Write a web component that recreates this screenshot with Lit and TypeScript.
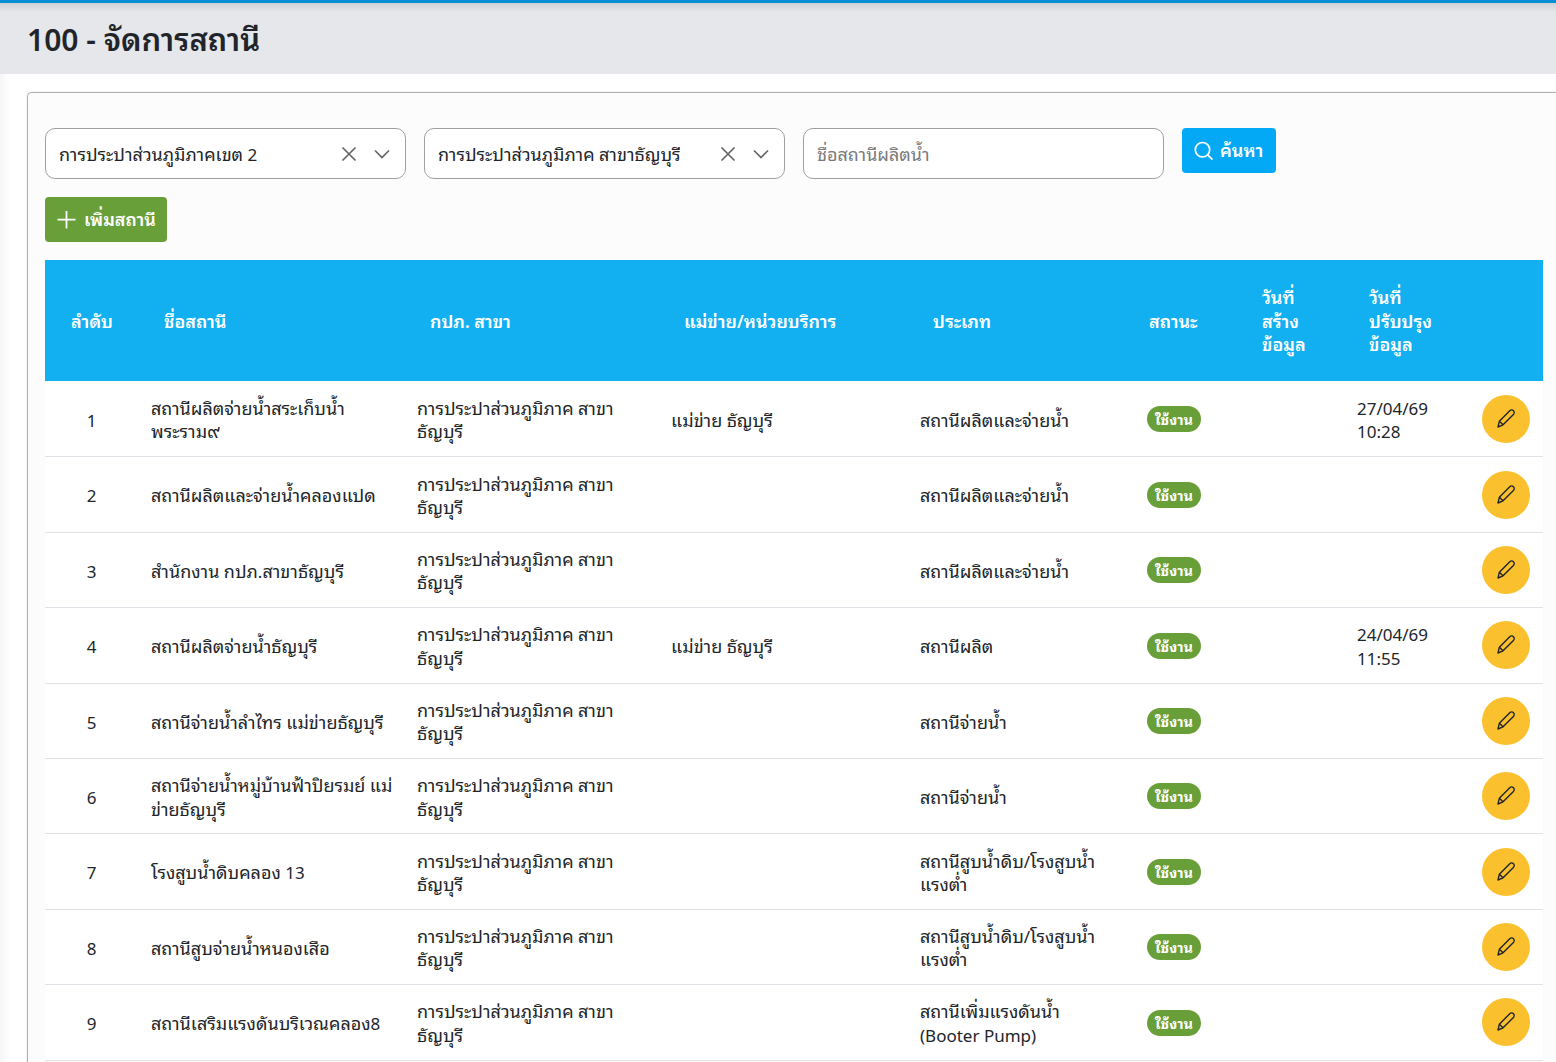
import { LitElement, html, css, svg } from "lit";
import { customElement } from "lit/decorators.js";

const t = (s: string) =>
  s.split(/([\u0E00-\u0E7F]+)/).map((p, i) => (i % 2 ? html`<span class="th">${p}</span>` : p));

const BR = "การประปาส่วนภูมิภาค สาขาธัญบุรี";
const rows = [
  ["1", "สถานีผลิตจ่ายน้ำสระเก็บน้ำพระราม๙", "แม่ข่าย ธัญบุรี", "สถานีผลิตและจ่ายน้ำ", "27/04/69 10:28"],
  ["2", "สถานีผลิตและจ่ายน้ำคลองแปด", "", "สถานีผลิตและจ่ายน้ำ", ""],
  ["3", "สำนักงาน กปภ.สาขาธัญบุรี", "", "สถานีผลิตและจ่ายน้ำ", ""],
  ["4", "สถานีผลิตจ่ายน้ำธัญบุรี", "แม่ข่าย ธัญบุรี", "สถานีผลิต", "24/04/69 11:55"],
  ["5", "สถานีจ่ายน้ำลำไทร แม่ข่ายธัญบุรี", "", "สถานีจ่ายน้ำ", ""],
  ["6", "สถานีจ่ายน้ำหมู่บ้านฟ้าปิยรมย์ แม่ข่ายธัญบุรี", "", "สถานีจ่ายน้ำ", ""],
  ["7", "โรงสูบน้ำดิบคลอง 13", "", "สถานีสูบน้ำดิบ/โรงสูบน้ำแรงต่ำ", ""],
  ["8", "สถานีสูบจ่ายน้ำหนองเสือ", "", "สถานีสูบน้ำดิบ/โรงสูบน้ำแรงต่ำ", ""],
  ["9", "สถานีเสริมแรงดันบริเวณคลอง8", "", "สถานีเพิ่มแรงดันน้ำ (Booter Pump)", ""],
];

const xIcon = html`<svg class="ic" width="20" height="20" viewBox="0 0 20 20" fill="none" stroke="#666" stroke-width="1.7"><path d="M3.5 3.5 16.5 16.5M16.5 3.5 3.5 16.5"/></svg>`;
const chev = html`<svg class="ic" width="20" height="20" viewBox="0 0 20 20" fill="none" stroke="#666" stroke-width="1.7"><path d="M3 6.5 10 13.5 17 6.5"/></svg>`;
const pencil = svg`<path d="M13.76 1.76A2.6 2.6 0 0 1 17.44 5.44L7.04 15.84 2 18 3.36 12.16Z"/><path d="M3.36 12.16 7.04 15.84"/>`;

@customElement("app-root")
export class AppRoot extends LitElement {
  static styles = css`
    :host { display: block; height: 1062px; overflow: hidden; background: #fff; font-family: "Noto Sans", "Noto Sans Thai Looped", sans-serif; color: #212529; font-size: 17px; line-height: 23.5px; }
    .th { font-size: 18px; }
    .head { box-sizing: border-box; height: 74px; border-top: 3px solid #0a8fd6; background: #e5e7eb; background-image: linear-gradient(#cfd1d5, #e5e7eb 9px); display: flex; align-items: center; padding: 2px 0 0 27px; }
    h1 { margin: 0; font-size: 30px; font-weight: 600; line-height: 40px; color: #212529; }
    h1 .th { font-size: 31px; }
    .wrap { padding: 18px 0 0 27px; background: linear-gradient(90deg, #f6f6f6, #fff 10px); }
    .panel { border: 1px solid #b0b0b0; border-right: 0; border-bottom: 0; border-radius: 5px 0 0 0; background: #fcfcfc; padding: 35px 13px 0 17px; height: 1000px; box-shadow: 0 0 2px rgba(0, 0, 0, 0.15); }
    .filters { display: flex; gap: 18px; align-items: flex-start; }
    .field { box-sizing: border-box; width: 361px; height: 51px; border: 1px solid #a0a0a0; border-radius: 10px; background: #fff; display: flex; align-items: center; padding: 0 13px; gap: 13px; white-space: nowrap; }
    .grow { flex: 1; color: #212529; padding-top: 2px; }
    .ph { color: #7a7a7a; padding-top: 2px; }
    .ic { display: block; flex: none; }
    .btn { box-sizing: border-box; border: 0; color: #fff; font-weight: 600; line-height: 23px; height: 45px; border-radius: 4px; display: flex; align-items: center; }
    .search { background: #03a9f4; width: 94px; padding: 0 0 0 12px; gap: 6px; }
    .add { background: #689f38; width: 122px; padding: 0 0 0 12px; margin-top: 18px; gap: 7px; }
    table { border-collapse: collapse; table-layout: fixed; width: 1498px; margin-top: 18px; background: #fff; }
    th { box-sizing: border-box; background: #12b0f0; color: #fff; font-weight: 600; text-align: left; height: 121.45px; padding: 2px 8px 0 26px; vertical-align: middle; }
    th.c5 { padding-left: 15px; }
    th.c6 { padding: 2px 30px 0 13px; }
    th.c7 { padding: 2px 35px 0 25px; }
    td { height: 75.41px; box-sizing: border-box; padding: 3px 13px 0; border-bottom: 1px solid #dee2e6; vertical-align: middle; }
    td.n { text-align: center; padding: 3px 0 0; }
    td.name { padding-right: 6px; }
    td.stat { padding-top: 0; }
    td.date { padding-right: 40px; }
    td.act { padding-top: 0; }
    .badge { display: inline-block; background: #689f38; color: #fff; font-size: 14px; font-weight: 700; line-height: 26px; height: 26px; padding: 0 8px; border-radius: 13px; vertical-align: middle; }
    .badge .th { font-size: 14.5px; }
    .edit { display: flex; align-items: center; justify-content: center; width: 48px; height: 48px; border-radius: 50%; background: #fbc02d; }
  `;

  render() {
    const cols = [93, 266, 254, 249, 227, 115, 95, 125, 74];
    const heads = ["ลำดับ", "ชื่อสถานี", "กปภ. สาขา", "แม่ข่าย/หน่วยบริการ", "ประเภท", "สถานะ", "วันที่สร้างข้อมูล", "วันที่ปรับปรุงข้อมูล", ""];
    return html`
      <div class="head"><h1>${t("100 - จัดการสถานี")}</h1></div>
      <div class="wrap"><div class="panel">
        <div class="filters">
          <div class="field"><span class="grow">${t("การประปาส่วนภูมิภาคเขต 2")}</span>${xIcon}${chev}</div>
          <div class="field"><span class="grow">${t(BR)}</span>${xIcon}${chev}</div>
          <div class="field"><span class="ph">${t("ชื่อสถานีผลิตน้ำ")}</span></div>
          <div class="btn search">
            <svg width="20" height="20" viewBox="0 0 20 20" fill="none" stroke="#fff" stroke-width="1.7"><circle cx="8.5" cy="8.7" r="7.2"/><path d="M13.7 13.9 18.5 18.6"/></svg>
            <span>${t("ค้นหา")}</span>
          </div>
        </div>
        <div class="btn add">
          <svg width="20" height="20" viewBox="0 0 20 20" fill="none" stroke="#fff" stroke-width="1.8"><path d="M9.5 1v17.5M.5 9.7h18"/></svg>
          <span>${t("เพิ่มสถานี")}</span>
        </div>
        <table>
          <colgroup>${cols.map((w) => html`<col style="width:${w}px" />`)}</colgroup>
          <thead><tr>${heads.map((h, i) => html`<th class="c${i}">${t(h)}</th>`)}</tr></thead>
          <tbody>
            ${rows.map((r) => html`<tr>
              <td class="n">${r[0]}</td><td class="name">${t(r[1])}</td><td>${t(BR)}</td><td>${t(r[2])}</td><td>${t(r[3])}</td>
              <td class="stat"><span class="badge">${t("ใช้งาน")}</span></td><td></td><td class="date">${r[4]}</td>
              <td class="act"><div class="edit"><svg width="20" height="20" viewBox="0 0 20 20" fill="none" stroke="#212529" stroke-width="1.4" stroke-linejoin="round">${pencil}</svg></div></td>
            </tr>`)}
          </tbody>
        </table>
      </div></div>
    `;
  }
}
